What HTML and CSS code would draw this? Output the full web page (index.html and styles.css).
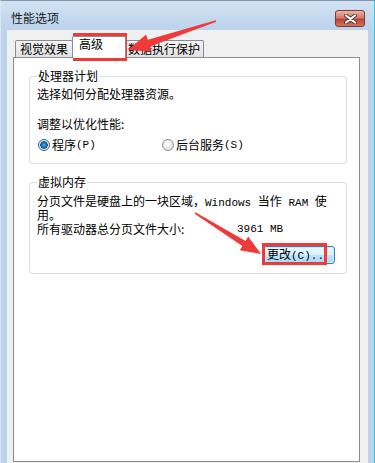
FILE: index.html
```html
<!DOCTYPE html>
<html lang="zh-CN">
<head>
    <meta charset="UTF-8">
    <meta name="viewport" content="width=device-width, initial-scale=1.0">
    <title>性能选项</title>
    <link rel="stylesheet" href="styles.css">
</head>
<body>

    <div class="window">
        <div class="titlebar">
            <span class="title">性能选项</span>
            <span class="close">
                <svg width="13" height="10" viewBox="0 0 13 10">
                    <path d="M2 1.5 L11 8.5 M11 1.5 L2 8.5" stroke="#4e3a3a" stroke-width="4" stroke-linecap="round"/>
                    <path d="M2 1.5 L11 8.5 M11 1.5 L2 8.5" stroke="#fff" stroke-width="2.2" stroke-linecap="round"/>
                </svg>
            </span>
        </div>

        <div class="client">
            <div class="tabs">
                <div class="tab first">视觉效果</div>
                <div class="tab active">高级</div>
                <div class="tab last">数据执行保护</div>
            </div>

            <div class="panel">
                <fieldset class="group">
                    <legend>处理器计划</legend>
                    <p class="line">选择如何分配处理器资源。</p>
                    <p class="line spaced">调整以优化性能:</p>
                    <div class="radios">
                        <label class="radio checked"><span class="dot"></span>程序<span class="lat">(P)</span></label>
                        <label class="radio"><span class="dot"></span>后台服务<span class="lat">(S)</span></label>
                    </div>
                </fieldset>

                <fieldset class="group vm">
                    <legend>虚拟内存</legend>
                    <p class="wrap">分页文件是硬盘上的一块区域，<span class="lat">Windows </span>当作<span class="lat"> RAM </span>使用。</p>
                    <div class="size-row">
                        <span class="size-label">所有驱动器总分页文件大小:</span>
                        <span class="lat">3961 MB</span>
                    </div>
                    <div class="actions">
                        <button class="btn">更改<span class="lat">(C)..</span></button>
                    </div>
                </fieldset>
            </div>
        </div>
    </div>

    <!-- red annotations drawn over the dialog -->
    <svg class="marks" width="375" height="463" viewBox="0 0 375 463">
        <rect x="74.5" y="34.5" width="51" height="25" fill="none" stroke="#f03a3a" stroke-width="3"/>
        <rect x="263.5" y="244.5" width="62" height="19" fill="none" stroke="#f03a3a" stroke-width="3"/>
        <polygon fill="#f03a3a" points="128,50 151.7,51.6 150,46.4 216.3,21.8 215.7,20.2 147.8,39.8 146.1,34.6"/>
        <polygon fill="#f03a3a" points="261,254 239.8,250.2 242.4,246 194.6,213.7 195.4,212.3 245.6,240.9 248.2,236.6"/>
    </svg>

</body>
</html>
```

FILE: styles.css
```css
body {
    margin: 0;
    position: relative;
    font-family: "Noto Sans CJK SC", sans-serif;
    font-size: 12px;
    color: #000;
}
.window {
    width: 375px;
    height: 463px;
    box-sizing: border-box;
    overflow: hidden;
    display: flex;
    flex-direction: column;
    background: #bcd3eb;
    border-top: 1px solid #8296ad;
    border-left: 1px solid #dbe7f3;
    border-right: 1px solid #2ec6f2;
}
.titlebar {
    height: 29px;
    flex-shrink: 0;
    display: flex;
    justify-content: space-between;
    align-items: flex-start;
    padding: 0 9px 0 10px;
    background: linear-gradient(#d2e2f3, #bcd3eb);
}
.title {
    margin-top: 10px;
    line-height: 14px;
    color: #1a1a1a;
}
.close {
    margin-top: 9px;
    width: 30px;
    height: 17px;
    box-sizing: border-box;
    display: flex;
    align-items: center;
    justify-content: center;
    border: 1px solid #7c3a32;
    border-radius: 3px;
    background: linear-gradient(#eab3a6, #d57a69 45%, #c1432f 55%, #d3725e);
}
.client {
    flex: 1;
    margin: 0 6px;
    padding: 0 8px 1px 6px;
    display: flex;
    flex-direction: column;
    background: #f0f0f0;
}
.tabs {
    height: 27px;
    flex-shrink: 0;
    display: flex;
    align-items: flex-end;
    padding-left: 2px;
}
.tab {
    height: 17px;
    box-sizing: border-box;
    line-height: 15px;
    border: 1px solid #898c95;
    border-bottom: none;
    border-radius: 2px 2px 0 0;
    background: linear-gradient(#f3f3f3, #e2e2e2);
    white-space: nowrap;
}
.tab.first {
    padding: 0 4px;
}
.tab.active {
    position: relative;
    z-index: 1;
    width: 54px;
    height: 22px;
    line-height: 14px;
    margin: 0 -1px -1px -1px;
    padding-left: 6px;
    box-sizing: border-box;
    background: #fff;
}
.tab.last {
    padding: 0 3px 0 2px;
}
.panel {
    flex: 1;
    background: #fff;
    border: 1px solid #898c95;
    padding: 11px 12px 0 15px;
}
.group {
    margin: 0;
    min-width: 0;
    padding: 0 7px 11px 7px;
    border: 1px solid #d5dfe5;
    border-radius: 3px;
}
.group legend {
    padding: 0 1px;
    line-height: 14px;
}
.line {
    margin: 4px 0 0 0;
    line-height: 14px;
}
.line.spaced {
    margin-top: 16px;
}
.radios {
    display: flex;
    margin-top: 7px;
    line-height: 14px;
}
.radio {
    display: flex;
    align-items: center;
}
.radio:first-child {
    width: 124px;
}
.dot {
    width: 12px;
    height: 12px;
    box-sizing: border-box;
    margin: 0 2px 0 1px;
    border-radius: 50%;
    border: 1px solid #8e8f8f;
    background: radial-gradient(circle at 45% 40%, #ffffff, #e4e4e4 60%, #cfcfcf);
}
.radio.checked .dot {
    border-color: #2c628b;
    background: radial-gradient(circle at 50% 50%, #56b2ec 0, #1c6bb3 2.5px, #0e4d8c 3.5px, #dcecf8 4px, #ffffff 6px);
}
.lat {
    font-family: "Liberation Mono", monospace;
    font-size: 11px;
    white-space: pre;
}
.vm {
    margin-top: 11px;
    padding-bottom: 9px;
}
.wrap {
    width: 296px;
    margin: 6px 0 0 0;
    line-height: 12px;
}
.size-row {
    display: flex;
    margin-top: 1px;
    line-height: 14px;
}
.size-label {
    width: 200px;
}
.actions {
    display: flex;
    justify-content: flex-end;
    padding-right: 4px;
    margin-top: 10px;
}
.btn {
    width: 72px;
    height: 18px;
    box-sizing: border-box;
    padding: 0 0 0 3px;
    text-align: left;
    font-family: inherit;
    font-size: 12px;
    line-height: 14px;
    color: #000;
    border: 1px solid #3c7fb1;
    border-radius: 3px;
    background: linear-gradient(#eaf6fd, #d9f0fc 50%, #bee6fd 50%, #a7d9f5);
    box-shadow: inset 0 0 0 1px #c8ecfb;
}
.marks {
    position: absolute;
    top: 0;
    left: 0;
    pointer-events: none;
}
```
